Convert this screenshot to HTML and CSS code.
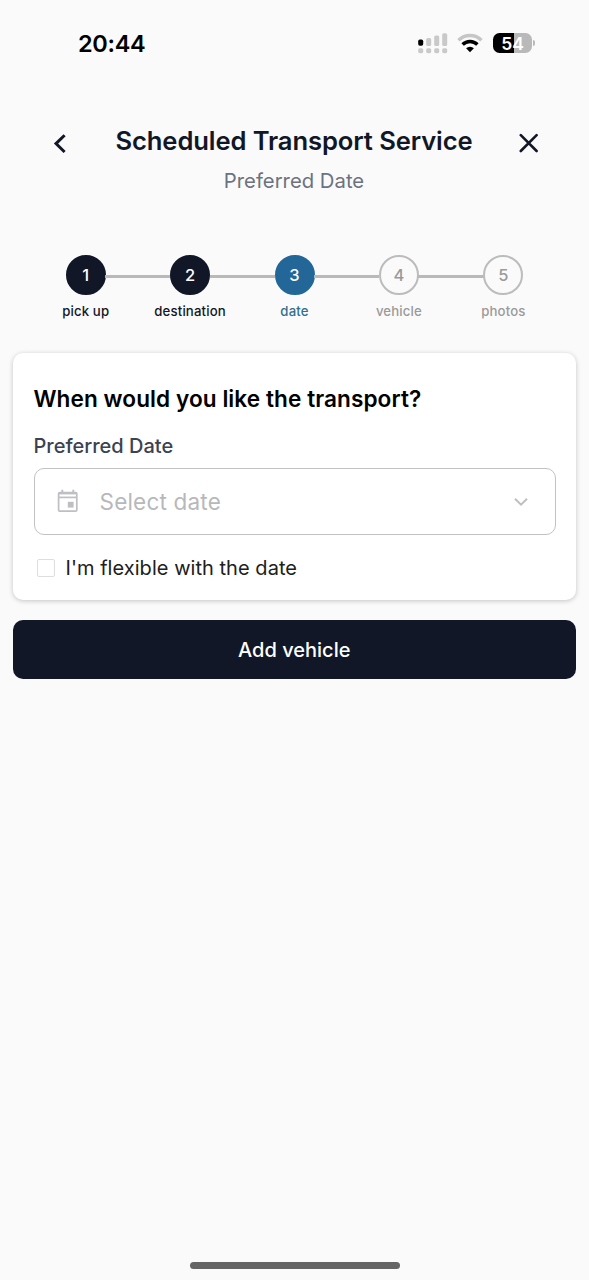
FILE: index.html
```html
<!DOCTYPE html>
<html lang="en">
<head>
<meta charset="utf-8">
<title>Scheduled Transport Service</title>
<link rel="stylesheet" href="styles.css">
</head>
<body>
<div class="screen">
  <div class="status">
    <span class="time">20:44</span>
    <div class="indicators">
      <svg class="signal" width="30" height="22" viewBox="0 0 30 22">
        <g fill="#c9c9c9">
          <rect x="8.2" y="5" width="5" height="8" rx="1.6"/>
          <rect x="16.2" y="2.5" width="5" height="10.5" rx="1.6"/>
          <rect x="24.2" y="0.3" width="5" height="12.7" rx="1.6"/>
          <rect x="0.2" y="15.2" width="5" height="5" rx="1.6"/>
          <rect x="8.2" y="15.2" width="5" height="5" rx="1.6"/>
          <rect x="16.2" y="15.2" width="5" height="5" rx="1.6"/>
          <rect x="24.2" y="15.2" width="5" height="5" rx="1.6"/>
        </g>
        <rect x="0.2" y="6.5" width="5" height="6.3" rx="1.7" fill="#000"/>
      </svg>
      <svg class="wifi" width="26" height="20" viewBox="0 0 26 20" fill="none" stroke-width="3.4">
        <path d="M1.5 7.3a16.3 16.3 0 0 1 23 0" stroke="#c6c6c6"/>
        <path d="M5.6 11.5a10.5 10.5 0 0 1 14.8 0" stroke="#000"/>
        <path d="M13 19.2l-3.9-3.9a5.5 5.5 0 0 1 7.8 0z" fill="#000"/>
      </svg>
      <div class="battery"><span class="level">54</span><i class="cap"></i></div>
    </div>
  </div>

  <header class="header">
    <svg class="back" width="14" height="20" viewBox="0 0 14 20" fill="none" stroke="#111726" stroke-width="3"><path d="M11.6 1.2L3 9.6l8.6 8.4"/></svg>
    <div class="titles">
      <h1><span>Scheduled Transport Service</span></h1>
      <p><span>Preferred Date</span></p>
    </div>
    <svg class="close" width="20" height="20" viewBox="0 0 20 20" fill="none" stroke="#111726" stroke-width="2.6" stroke-linecap="round"><path d="M1.8 2.2l15.8 15.8M17.6 2.2L1.8 18"/></svg>
  </header>

  <ol class="steps">
    <li class="step done"><b>1</b><span>pick up</span></li>
    <li class="step done"><b>2</b><span>destination</span></li>
    <li class="step current"><b>3</b><span>date</span></li>
    <li class="step"><b>4</b><span>vehicle</span></li>
    <li class="step"><b>5</b><span>photos</span></li>
  </ol>

  <main class="content">
    <section class="card">
      <h2><span>When would you like the transport?</span></h2>
      <div class="label"><span>Preferred Date</span></div>
      <div class="select">
        <svg class="calendar" width="22" height="24" viewBox="0 0 22 24" fill="none" stroke="#bebfc3">
          <rect x="1.6" y="3.6" width="18.2" height="18.6" rx="1.2" stroke-width="1.7"/>
          <path d="M1.6 4.4h18.2" stroke-width="2"/>
          <path d="M1.6 8.4h18.2" stroke-width="1.7"/>
          <path d="M5.3 .8v3M16.3 .8v3" stroke-width="1.9"/>
          <rect x="10.8" y="12.8" width="5.8" height="5.8" fill="#bebfc3" stroke="none"/>
        </svg>
        <span class="placeholder">Select date</span>
        <svg class="chevron" width="14" height="10" viewBox="0 0 14 10" fill="none" stroke="#bfbfbf" stroke-width="2"><path d="M1 1.7l6 6 6-6"/></svg>
      </div>
      <div class="flexible">
        <i class="box"></i>
        <span>I'm flexible with the date</span>
      </div>
    </section>
    <div class="button"><span>Add vehicle</span></div>
  </main>
  <div class="home"></div>
</div>
</body>
</html>
```
FILE: styles.css
```css
* { box-sizing: border-box; margin: 0; padding: 0; }
body { background: #fafafa; font-family: Inter, "Liberation Sans", sans-serif; }
svg { display: block; flex: none; }
.screen { display: flex; flex-direction: column; width: 589px; height: 1280px; overflow: hidden; }

.status { display: flex; justify-content: space-between; height: 86px; padding: 28px 54px 0 78px; }
.time { font-size: 23.5px; line-height: 32px; font-weight: 600; color: #000; letter-spacing: -0.3px; }
.indicators { display: flex; align-items: flex-start; }
.signal { margin: 5px 9px 0 0; }
.wifi { margin: 5px 10px 0 0; }
.battery { display: flex; align-items: center; margin-top: 5px; }
.level { width: 39px; height: 20px; border-radius: 6.5px; background: linear-gradient(90deg, #000 54%, #b9b9b9 54%); color: #fff; font-size: 17.5px; line-height: 21px; font-weight: 600; text-align: center; }
.cap { width: 2px; height: 6px; margin-left: 1px; border-radius: 0 2px 2px 0; background: #b9b9b9; }

.header { display: flex; align-items: flex-start; justify-content: space-between; height: 169px; padding: 39px 50px 0 53px; }
.back { margin-top: 9px; }
.close { margin-top: 8px; }
.titles { display: flex; flex-direction: column; align-items: center; padding-left: 2px; }
h1 { font-size: 25.6px; line-height: 32px; font-weight: 600; color: #111726; white-space: nowrap; letter-spacing: -0.1px; }
.titles p { margin-top: 9px; font-size: 20.3px; line-height: 30px; color: #6b7280; }

.steps { display: flex; width: 522px; height: 98px; margin-left: 33.5px; list-style: none; }
.step { position: relative; display: flex; flex: 1; flex-direction: column; align-items: center; color: #9a9a9a; }
.step + .step::before { content: ""; position: absolute; top: 19.5px; right: calc(50% + 19.5px); width: 65.5px; height: 3px; background: #b9b9b9; }
.step b { position: relative; width: 40px; height: 40px; border: 2.5px solid #bcbcbc; border-radius: 50%; font-size: 16.5px; line-height: 36px; font-weight: 500; text-align: center; }
.step span { margin-top: 6px; font-size: 13.2px; line-height: 20px; font-weight: 500; letter-spacing: 0.15px; }
.done { color: #111726; }
.done b { background: #111726; border-color: #111726; color: #fff; }
.current { color: #33708f; }
.current b { background: #226798; border-color: #226798; color: #fff; }

.content { display: flex; flex-direction: column; gap: 20px; padding: 0 13.5px 0 13px; }
.card { height: 247px; padding: 30px 20px 0 20.5px; border-radius: 10px; background: #fff; box-shadow: 0 1px 5px rgba(0,0,0,.22); }
h2 { font-size: 22.6px; line-height: 32px; font-weight: 600; color: #000; white-space: nowrap; letter-spacing: 0.07px; }
.label { margin-top: 16px; font-size: 20px; line-height: 30px; font-weight: 500; color: #3b4252; }
.select { display: flex; align-items: center; height: 67px; margin-top: 7px; padding: 0 27px 0 22px; border: 1.5px solid #c2c2c2; border-radius: 10px; }
.calendar { margin-bottom: 2px; }
.placeholder { flex: 1; margin-left: 21px; font-size: 22.5px; line-height: 32px; color: #b7b8bc; letter-spacing: 0.2px; }
.flexible { display: flex; align-items: center; height: 32px; margin-top: 17px; padding-left: 3px; color: #202020; font-size: 20px; line-height: 32px; letter-spacing: 0.04px; }
.box { width: 18px; height: 18px; margin-right: 11px; border: 1.5px solid #dedede; border-radius: 2px; }
.button { height: 59px; border-radius: 10px; background: #111726; color: #fff; font-size: 20px; line-height: 60px; font-weight: 500; text-align: center; }
.home { width: 210px; height: 7px; margin: auto auto 11px 190px; border-radius: 4px; background: #656565; }
```
